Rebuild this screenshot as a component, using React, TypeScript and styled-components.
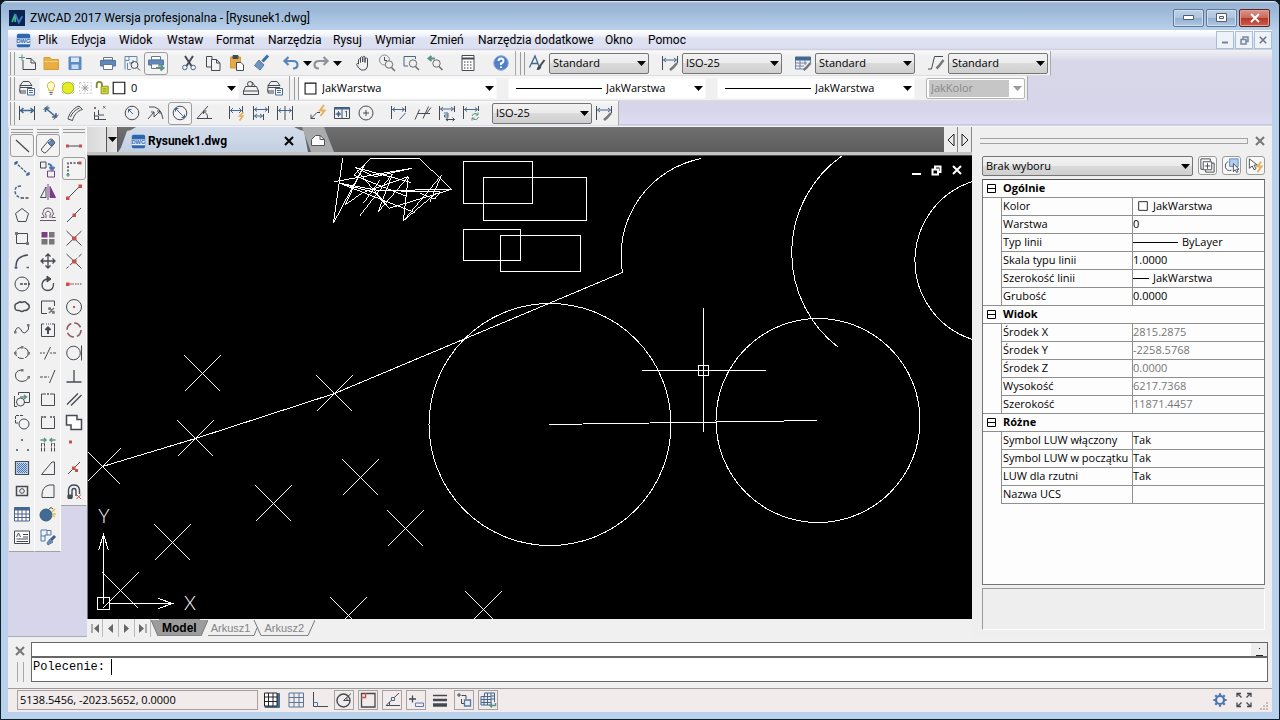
import React from 'react';
import styled, { createGlobalStyle, css } from 'styled-components';

const UI = '"Open Sans", "Noto Sans", sans-serif';
const CAPTION = 'Roboto, "Open Sans", sans-serif';
const INK = '#454a52';
const BLUE = '#44678f';
const RED = '#c8504c';
const GREEN = '#5c9480';
const PURPLE = '#7a3e84';

const Global = createGlobalStyle`
  * { box-sizing: border-box; }
  body { margin: 0; background: #0c1a22; font: 11px/16px ${UI}; color: #000; }
  button, select, input { font: inherit; color: inherit; margin: 0; padding: 0; border: 0; background: none; }
  svg { display: block; }
`;

/* ---------- icons ---------- */

const ICONS: Record<string, React.ReactNode> = {
  newFile: <><path d="M5 6V15.500H17.500V9L13 4.500H8M13 4.500V9H17.500" /><path d="M1 3.500H7M4 .5V6.500" stroke={GREEN} /></>,
  open: <><path d="M2 3.500H8L10 5.500H16.500V15.500H2Z" fill="#e8ae45" stroke="#d79a30" /><path d="M2 7.500H16.500" stroke="#f6cf83" /></>,
  save: <><path d="M3 3H15V15.500H3Z" fill="#5b8bc0" stroke="#5b8bc0" /><path d="M5 3.500H13V8H5Z" fill="#d9e6f4" stroke="none" /><path d="M5.500 10.500H12.500V15H5.500Z" fill="#c9daee" stroke="none" /></>,
  print: <><path d="M4.500 3.500H13.500V6H4.500Z" fill="#fff" stroke="#66788f" /><path d="M1.500 6.500H16.500V12H1.500Z" fill="#6088bb" stroke="#5277a5" /><path d="M4.500 10.500H13.500V15.500H4.500Z" fill="#fff" stroke="#66788f" /></>,
  preview: <><path d="M2 15.500V2.500H14V8M2 6.500H6V2.500M6 9H10V6M4.500 9V15.500H8" stroke="#6387b0" /><circle cx="11.500" cy="11" r="3.500" /><path d="M14 13.500L17 16.500" /></>,
  publish: <><path d="M4.500 2.500H13.500V6H4.500Z" fill="#fff" stroke="#66788f" /><path d="M1.500 6H16.500V11H1.500Z" fill="#6088bb" stroke="#5277a5" /><path d="M4.500 10H12V14.500H4.500Z" fill="#fff" stroke="#66788f" /><path d="M9 14H16M13.500 11.500L16.500 14L13.500 16.500" stroke={GREEN} strokeWidth="2" /></>,
  cut: <><path d="M5 2L11.500 12M13 2L6.500 12" strokeWidth="2" /><circle cx="4.800" cy="13.500" r="2.300" stroke={BLUE} /><circle cx="13.200" cy="13.500" r="2.300" stroke={BLUE} /></>,
  copyClip: <><path d="M2.500 2.500H8V13H2.500Z" /><path d="M7.500 5.500H12.500L16 9V16.500H7.500Z" fill="#f4f4f4" /><path d="M12.500 5.500V9H16" /></>,
  paste: <><path d="M2.500 3H12.500V14H2.500Z" fill="#e3a94a" stroke="#d79a30" /><path d="M5 1.500H10V4.500H5Z" fill={INK} /><path d="M8.500 8.500H13L15.500 11V16.500H8.500Z" fill="#fff" /></>,
  brush: <><path d="M16 1.500L10.500 7.500" stroke="#3d6ea8" strokeWidth="3" /><path d="M7 6L12 11L8 16L2.500 11.500Z" fill="#7093bd" stroke="#57799f" /></>,
  undo: <path d="M6.500 3L2.500 7L6.500 11M3 7H11C17 7 17 14.500 11 14.500" stroke="#5585bd" strokeWidth="2.200" />,
  redo: <path d="M11.500 3L15.500 7L11.500 11M15 7H7C1 7 1 14.500 7 14.500" stroke="#8d9299" strokeWidth="2.200" />,
  hand: <path d="M4.500 10V5.500Q5.500 4 6.500 5.500V8.500V3.500Q7.500 2 8.700 3.500V8V3Q9.700 1.500 11 3V8.500V4.500Q12.200 3.200 13.500 4.500V12Q13 16 10 16H7.500Q5 15.500 2.500 10.500Q3 8.500 4.500 10" />,
  zoomReal: <><circle cx="6.500" cy="6" r="5" stroke="#8a8f96" /><path d="M6.500 3V6.500H9" /><circle cx="11" cy="10.500" r="3.700" fill="#f0f0f0" stroke="#6b6b6b" /><path d="M13.500 13.500L17 17" strokeWidth="1.500" stroke="#6b6b6b" /></>,
  zoomWin: <><path d="M13.500 5V2.500H2V12H6" stroke={BLUE} /><circle cx="11" cy="9.500" r="3.700" stroke="#6b6b6b" /><path d="M13.500 12.500L17 16" strokeWidth="1.500" stroke="#6b6b6b" /></>,
  zoomPrev: <><path d="M9 4.500H3M5.500 2L2.500 4.500L5.500 7" stroke={GREEN} strokeWidth="2" /><circle cx="10.500" cy="9.500" r="3.700" stroke="#6b6b6b" /><path d="M13 12.500L16.500 16" strokeWidth="1.500" stroke="#6b6b6b" /></>,
  calc: <><path d="M3 1.500H15V16.500H3Z" fill="#fff" /><path d="M3 4.500H15" strokeWidth="2" /><path d="M5 8H14M5 11H14M5 14H14" strokeDasharray="1.500 1.500" strokeWidth="1.500" stroke="#777" /></>,
  help: <><circle cx="9" cy="9" r="7.200" fill="#5080c8" stroke="#7aa0d8" /><path d="M6.500 7Q6.500 4.500 9 4.500T11.500 7Q11.500 8.500 9 9.500V11M9 12.500V14" stroke="#fff" strokeWidth="2" /></>,
  textStyle: <><path d="M1.500 13.500L7 2L11.500 13.500M3.500 9.500H10" stroke={BLUE} strokeWidth="1.300" /><path d="M16.500 6L12 12" strokeWidth="2" /><path d="M12.500 11.500Q10 12 9 15.500Q12.500 16 13 12.500" fill={INK} /></>,
  dimStyle: <><path d="M1.500 2V16M16.500 2V9" /><path d="M2.500 6H15.500M5 4L2.500 6L5 8M13 4L15.500 6L13 8" stroke={BLUE} /><path d="M16 9L12 13.500L9 16" strokeWidth="2.500" stroke="#777" /></>,
  tableStyle: <><path d="M1.500 3H16.500V6H1.500Z" fill={BLUE} stroke={BLUE} /><path d="M1.500 6V15H9M1.500 9H13M1.500 12H10M6 6V15M11 6V11M16.500 6V9" stroke="#6c87ab" /><path d="M16.500 9L12 14L9.500 16" strokeWidth="2.500" stroke="#777" /></>,
  leaderStyle: <><path d="M16 2.500H7.500L4.500 15H1" /><path d="M16.500 6L12 12L9.500 14.500" strokeWidth="2.500" stroke="#777" /></>,
  layers: <><path d="M5 2.500H11L14 6.500H2ZM2 6.500V8.500H14M2 8.500L1.500 12H8M2 12V14H8" /><path d="M9.500 9.500H16.500V16H9.500Z" fill="#fff" stroke={BLUE} /><path d="M11 11.500H15M11 13.500H15" stroke={BLUE} /></>,
  layerPrev: <><path d="M3.500 7.500H14.500L16.500 12H1.500ZM1.500 12V15.500H16.500V12" /><circle cx="8" cy="5" r="2.500" fill="#f0f0f0" /><path d="M10 3L13 7" /></>,
  bulb: <><path d="M9 2A4.500 4.500 0 0 0 6.500 10V12H11.500V10A4.500 4.500 0 0 0 9 2Z" fill="#fffbc4" stroke="#c9ad3a" /><path d="M7 14H11M7.500 16H10.500" /></>,
  sun: <><path d="M2 5L5 2M13 2L16 5M2 13L5 16M13 16L16 13" stroke="#b5b545" /><circle cx="9" cy="9" r="6.500" stroke="#9ab02a" fill="#e6ec22" /></>,
  freeze: <><path d="M3 3H16V15H3Z" stroke="#bbb" strokeDasharray="2 2" /><path d="M9 5V13M5 9H13M6 6L12 12M12 6L6 12" stroke="#999" /></>,
  lock: <><path d="M3 9V5Q3 2 6 2T9 5V9" stroke="#7e8b25" strokeWidth="2" /><path d="M8 7H16V15.500H8Z" fill="#d8dd35" stroke="#7e8b25" /><path d="M10 10H14M10 12.500H14" stroke="#7e8b25" /></>,
  swatch: <path d="M2.500 2.500H15.500V15.500H2.500Z" stroke="#111" strokeWidth="1.300" fill="#fff" />,
  dimLinear: <><path d="M1.500 2V16M16.500 2V16" /><path d="M2.500 6.500H15.500M5.500 4L2.500 6.500L5.500 9M12.500 4L15.500 6.500L12.500 9" stroke={BLUE} strokeWidth="1.500" /></>,
  dimAligned: <><path d="M1.500 6L6 1.500M11.500 15.500L16.500 11" /><path d="M3.500 4L14 13M3.500 8V4H7.500M14 9V13H10" stroke={BLUE} strokeWidth="1.600" /></>,
  dimArc: <path d="M2 15C3 10 7 4 13 2L16.500 5.500C11 7 8 11 6.500 16.500ZM4.500 13C6 9 9 6 13.500 4" />,
  dimOrdinate: <><path d="M4.500 8V15.500H16M4.500 12H8.500V15.500M8.500 6V11H14" /><path d="M4 3L6 5M6 3L4 5M13 2L15.500 4.500M15.500 2L13 4.500" stroke="#8a6a70" /></>,
  dimRadius: <><circle cx="9" cy="9" r="6.800" /><path d="M5.500 5.500L10 10M5.500 8.500V5.500H8.500" stroke={BLUE} /></>,
  dimJogged: <><path d="M2 3Q14 1 16 15" /><path d="M1 15L7 8V13L13 7M4 8H7M10 7H13V10" /></>,
  dimDiameter: <><circle cx="9" cy="9" r="6.800" /><path d="M4.500 4.500L13.500 13.500M4.500 7.500V4.500H7.500M13.500 10.500V13.500H10.500" stroke={BLUE} /></>,
  dimAngular: <path d="M13 2L2 14.500H17M8 7.500Q13 9 12.500 14M8.500 10V7H11.500" />,
  quickDim: <><path d="M1.500 2V15M14.500 2V10" /><path d="M2.500 6.500H13.500M5 4L2.500 6.500L5 9M11 4L13.500 6.500L11 9" stroke={BLUE} /><path d="M15.500 8L11.500 12H15L11.500 16.500" stroke="#e0ae55" strokeWidth="1.500" /></>,
  dimBase: <><path d="M1.500 2V16M16.500 2V9M11.500 10V16" /><path d="M2.500 5.500H15.500M5 3.500L2.500 5.500L5 7.500M13 3.500L15.500 5.500L13 7.500M2.500 12H10.500M5 10L2.500 12L5 14M8 10L10.500 12L8 14" stroke={BLUE} /></>,
  dimCont: <><path d="M1.500 2V16M9 2V16M16.500 2V16" /><path d="M2.500 6.500H15.500M5 4.500L2.500 6.500L5 8.500M13 4.500L15.500 6.500L13 8.500" stroke={BLUE} /></>,
  quickLeader: <><path d="M2 14.500L8 8.500H11M2 10.500V14.500H6" /><path d="M15 1L11 6.500H15.500L11.500 12" stroke="#e2b25c" strokeWidth="2" /></>,
  tolerance: <><path d="M1.500 3.500H16.500V14.500H1.500ZM9 3.500V14.500" /><path d="M1.500 4.500H16.500" stroke={BLUE} strokeWidth="2" /><path d="M5.500 7V13M2.500 10H8M12 8L13.500 7V13" stroke={BLUE} /><circle cx="5.500" cy="10" r="1.500" stroke={BLUE} /></>,
  centerMark: <><circle cx="9" cy="9" r="7" /><path d="M6 9H12M9 6V12" /></>,
  dimEdit: <><path d="M1.500 2V15M15.500 2V8" /><path d="M2.500 5.500H14.500M5 3.500L2.500 5.500L5 7.500M12 3.500L14.500 5.500L12 7.500M15.500 9L9.500 15.500" stroke={BLUE} /></>,
  dimOblique: <path d="M1 15.500L5.500 5.500M9 14.500L14.500 2.500M4 9.500H16M12.500 9.500L17 3.500" />,
  dimTextEdit: <><path d="M1.500 2V16M16.500 2V8" /><path d="M2.500 5H15.500M5 3L2.500 5L5 7M13 3L15.500 5L13 7M6 9H10V13H6.500V11H10" stroke={BLUE} /><path d="M8 15.500H16.500M10 13.500L8 15.500L10 17M14.500 13.500L16.500 15.500L14.500 17" /></>,
  dimUpdate: <><path d="M1.500 2V15M16.500 2V7" /><path d="M2.500 5.500H15.500M5 3.500L2.500 5.500L5 7.500M13 3.500L15.500 5.500L13 7.500" stroke={BLUE} /><path d="M10 12Q11 9 14 9.500L16 11M16 8.500V11H13.500M16.500 13Q15 16.500 12 15.500L10 14M10 16.500V14H12.500" stroke={GREEN} /></>,
  line: <path d="M3 3L16 15" strokeWidth="1.300" />,
  xline: <path d="M2 2L16 15M2 5V2H5M16 12V15H13" stroke={BLUE} strokeDasharray="3 1" strokeWidth="1.300" />,
  pline: <><path d="M8 3Q2 3 2 8T8 15" strokeDasharray="3 1.500" stroke={BLUE} strokeWidth="1.500" /><path d="M8 15H16" strokeDasharray="3 1.500" strokeWidth="1.500" /></>,
  polygon: <path d="M9 2.500L15.500 7.500L13 15.500H5L2.500 7.500Z" />,
  rect: <><path d="M3.500 4.500H14.500V14.500H3.500Z" /><path d="M2 3H5V6H2ZM13 13H16V16H13Z" fill="#777" stroke="none" /></>,
  arc: <><path d="M3 14Q3 4 15 3" strokeWidth="1.400" /><path d="M1.500 15.500H4.500M3 14V17M13.500 15.500H16" stroke={BLUE} strokeWidth="1.500" /></>,
  circle: <><circle cx="9" cy="9" r="7" /><path d="M7 9H17" strokeDasharray="3 1" strokeWidth="1.400" /></>,
  cloud: <path d="M5 5Q6 3 9 4.500Q12 2.500 14 5.500Q17 7 16 10Q14 13 11 12.500Q9 14.500 6.500 12.500Q2 13 2 9.500Q1 6 5 5Z" strokeWidth="1.500" />,
  spline: <><path d="M2 11Q4 4 7.500 8Q11 16 15.500 8V4" /><path d="M1 10H3.500V12.500H1ZM14 3H16.500V5.500H14Z" fill="#777" stroke="none" /></>,
  ellipse: <><ellipse cx="9" cy="9" rx="6.500" ry="5.500" strokeDasharray="6 1.500" /><path d="M1 8H3.500V10.500H1ZM8 2H10.500V4.500H8ZM14.500 8H17V10.500H14.500Z" fill="#777" stroke="none" /></>,
  ellArc: <><path d="M8 3Q2 4 2.500 9T9 14.500Q13 14.500 15.500 11" /><path d="M8 2H10.500V4.500H8ZM14.500 9H17V11.500H14.500Z" fill="#777" stroke="none" /></>,
  insert: <><path d="M5.500 5V2.500H16.500V12.500H11M1.500 6V16.500H4" /><circle cx="7.500" cy="12" r="4" /><path d="M7 7H13M11 5L13.500 7L11 9" stroke={GREEN} strokeWidth="1.500" /></>,
  block: <><path d="M2.500 10V2.500H11M2.500 10H5" strokeDasharray="3 1" /><circle cx="11" cy="11" r="5" fill="#f4f4f4" /></>,
  point: <path d="M8 3H10V5H8ZM3 13H5V15H3ZM14 13H16V15H14Z" fill="#6b7482" stroke="none" />,
  hatch: <><path d="M2.500 2.500H15.500V15.500H2.500Z" fill="#c4d4ee" strokeWidth="1.200" /><path d="M4 4.500H14M4 6.500H14M4 8.500H14M4 10.500H14M4 12.500H14" stroke="#4672ad" strokeDasharray="1 1" /><path d="M5 5.500H14M5 7.500H14M5 9.500H14M5 11.500H14M5 13.500H14" stroke="#4672ad" strokeDasharray="1 1" /></>,
  region: <><path d="M3.500 4.500H14.500V13.500H3.500Z" strokeWidth="1.500" /><circle cx="9" cy="9" r="2.300" /></>,
  table: <><path d="M1.500 2.500H16.500V16H1.500Z" fill="#fff" stroke={BLUE} /><path d="M1.500 4H16.500" stroke={BLUE} strokeWidth="3" /><path d="M1.500 9H16.500M1.500 12.500H16.500M5 5V16M9 5V16M13 5V16" stroke="#4c5f95" /></>,
  mtext: <><path d="M1.500 3H16.500V15.500H1.500Z" fill="#fff" /><path d="M3.500 9L5.500 5L7.500 9M10 6.500H15M10 9H15M3.500 11H15M3.500 13.500H15" /></>,
  erase: <><path d="M2.500 12L10.500 2.500Q12 1.500 13.500 2.500L15.500 5Q16 6 15 7L7 15.500Q5.500 16.500 4 15L2.500 13.500Z" /><path d="M9 6L13 3L15 5.500L12 9Z" fill="#6684bd" stroke={BLUE} /></>,
  copy: <><path d="M1.500 2H7V8H1.500Z" /><path d="M8.500 11H15.500V17H8.500Z" stroke={PURPLE} /><path d="M9 4Q13 4 13 9M10.500 7L13 10L15.500 7" stroke="#4c78ad" strokeWidth="2" /></>,
  mirror: <><path d="M7 4V14.500H1.500Z" /><path d="M9 1V17" stroke={PURPLE} /><path d="M11 3.500V14.500H16.500Z" fill={PURPLE} stroke={PURPLE} /></>,
  offset: <path d="M1 14.500H17M2 11.500H5V10Q2 8 4.500 5.500Q4.500 2 9 2T13.500 5.500Q16 8 13 10V11.500H16.500M7 12V9Q5 7 7.500 6Q9 4 10.500 6Q13 7 11 9V12" stroke="#6c4f72" />,
  array: <><path d="M2.500 3H8.500V8.500H2.500Z" fill={PURPLE} stroke="none" /><path d="M10 3H15.500V8.500H10ZM2.500 10H8.500V15.500H2.500ZM10 10H15.500V15.500H10Z" fill="#777" stroke="none" /></>,
  move: <path d="M9 2V16M2 9H16M6.500 4.500L9 2L11.500 4.500M6.500 13.500L9 16L11.500 13.500M4.500 6.500L2 9L4.500 11.500M13.500 6.500L16 9L13.500 11.500" strokeWidth="1.300" />,
  rotate: <><path d="M14.500 8Q15 15 9 15.500Q3 15.500 3 9.500Q3.500 4.500 9 4" strokeWidth="1.300" /><path d="M8 1L12 4L8 7Z" fill={INK} /></>,
  scale: <><path d="M8 15.500H2.500V3H15.500V8" /><path d="M10 10L15 15M15 10L10 15M10 12V10H12M13 15H15V13" stroke="#777" strokeWidth="1.500" /></>,
  stretch: <><path d="M2.500 3V15.500H15.500V3M2.500 3H5M13 3H15.500" /><path d="M7 3H12" strokeDasharray="1 1" /><path d="M9 13V7M6.500 9L9 6.500L11.500 9" strokeWidth="2" /></>,
  trim: <path d="M1 9H3M4 9H6M5.500 15.500L11.500 3M11 9H13M14 9H17" />,
  extend: <><path d="M1 10H10" strokeDasharray="3 1" /><path d="M10.500 16L16 3" /></>,
  breakOne: <><path d="M2.500 4H7M11 4H15.500V15.500H2.500V4" /><path d="M8 3H10V5H8Z" fill="#777" stroke="none" /></>,
  breakTwo: <><path d="M2.500 4V15.500H15.500V4" /><path d="M2 3H4.500V5H2ZM5 3H7V5H5ZM11 3H13V5H11ZM14 3H16V5H14Z" fill="#777" stroke="none" /></>,
  join: <><path d="M2.500 15.500V7.500H5.500V15.500M15.500 15.500V7.500H12.500V15.500" strokeDasharray="4 1" /><path d="M1.500 4H7M5 2L7 4L5 6M16.500 4H11M13 2L11 4L13 6" stroke={GREEN} strokeWidth="1.400" /></>,
  chamfer: <path d="M2.500 15.500L13 3H15.500V15.500Z" />,
  fillet: <path d="M3 15.500V13Q3 5 10 3H15V15.500H3" />,
  explode: <><circle cx="7" cy="10" r="6" fill="#426b93" stroke="#385b7e" /><path d="M10 4Q12 1 14 4" /><path d="M13 7L16 4M14 9H17M13 10L16 12" stroke="#e0c242" strokeWidth="1.500" /></>,
  matchProp: <><path d="M2 2H8V7H12V2.500H8M2 2V8H6V13H2V8M8 7H6V8" stroke="#4c78ad" /><path d="M16 8L11 13" stroke="#3d5e88" strokeWidth="3" /><path d="M11 11L14 14L9 17L8 15Z" fill="#6a8fba" stroke="#57799f" /></>,
  snapTrack: <><path d="M3 9H15" /><path d="M1 7.500H4V10.500H1ZM14 7.500H17V10.500H14Z" fill={RED} stroke="none" /></>,
  snapFrom: <><path d="M3 15V3H15" strokeDasharray="2 1.500" strokeWidth="1.500" /><path d="M13.500 1.500H16.500V4.500H13.500Z" fill={RED} stroke="none" /><path d="M2 14H4V16H2Z" stroke={GREEN} /></>,
  snapEnd: <><path d="M3 15L15 3" /><path d="M1 13.500H4.500V17H1ZM13.500 1.500H17V5H13.500Z" fill={RED} stroke="none" /></>,
  snapMid: <><path d="M2 16L16 2" /><path d="M7.500 7.500H11V11H7.500Z" fill={RED} stroke="none" /></>,
  snapInt: <><path d="M1.500 2L16.500 16.500M16.500 2L1.500 16.500" /><path d="M7.500 8H11V11H7.500Z" fill={RED} stroke={RED} /></>,
  snapApp: <><path d="M1.500 2L16.500 16.500" /><path d="M16.500 2L1.500 16.500" strokeDasharray="4 2" /><path d="M7.500 8H11V11H7.500Z" fill={RED} stroke={RED} /></>,
  snapExt: <><path d="M1 7.500H4.500V11H1Z" fill={RED} stroke="none" /><path d="M4 9H9" stroke={RED} /><path d="M10 9H17" strokeDasharray="1.500 1" /></>,
  snapCen: <><circle cx="9" cy="9" r="7.500" /><path d="M8 8H10V10H8Z" fill={RED} stroke="none" /></>,
  snapQuad: <circle cx="9" cy="9" r="7" strokeDasharray="8 3" stroke="#8e5a63" strokeWidth="1.600" />,
  snapTan: <><circle cx="8.500" cy="9" r="6.800" /><path d="M16.500 1.500V16.500" /></>,
  snapPerp: <path d="M9 3V15M1.500 15H16.500" strokeWidth="1.300" />,
  snapPar: <path d="M2 14.500L13 3.500M6 15.500L16.500 5" strokeWidth="1.300" />,
  snapIns: <path d="M1.500 2.500H12V6.500H16.500V16.500H6V12H1.500Z" fill="#fff" strokeWidth="1.500" />,
  snapNode: <path d="M4 4.500H7V7.500H4Z" fill={RED} stroke="none" />,
  snapNear: <><path d="M3 15L15 3" /><path d="M7 7.500H10.500V11H7Z M10 10H13V13H10Z" fill={RED} stroke="none" /></>,
  magnet: <><path d="M3.500 15.500V8Q4 3 9 3T14.500 8V12M7 15.500V9Q7 6.500 9 6.500T11 9V14" strokeWidth="1.400" /><path d="M3 13H7V16.500H3Z" fill={INK} /><path d="M11.500 12.500L16 17M16 12.500L11.500 17" stroke={RED} /></>,
  snapGrid: <><path d="M2 2.500H16.500V16.500H2Z" fill="#47708f" stroke="#47708f" /><path d="M1.500 2H14V15H1.500Z" fill="#fff" stroke="#222" /><path d="M1.500 6H14M1.500 10.500H14M5.500 2V15M10 2V15" stroke="#222" /></>,
  gridMode: <path d="M2 2H16.500V16H2ZM2 6.500H16.500M2 11.500H16.500M7 2V16M12 2V16" stroke="#5a7796" />,
  ortho: <><path d="M2.500 1V15.500H17" /><path d="M2.500 11.500H6.500V15.500" stroke="#5b76b8" /></>,
  polar: <><circle cx="8.500" cy="9.500" r="6.500" strokeWidth="1.400" /><path d="M8.500 9.500L16 2.500M8.500 9.500H15M12 6.500V9" /></>,
  osnap: <><path d="M2.500 2.500H16V16H2.500Z" strokeWidth="1.300" /><path d="M2 6.500H6.500V2" stroke={RED} strokeWidth="1.400" /></>,
  otrack: <><path d="M16 2L3 14.500H17M6.500 11V14.500" /><path d="M8.500 6.500H11.500V9.500H8.500Z" fill="#f1ecec" stroke={BLUE} /></>,
  dynInput: <><path d="M2 8H9M5.500 4.500V11.500" strokeWidth="1.300" /><path d="M8.500 12H16.500V15.500H8.500Z" stroke="#5b76b8" /></>,
  lineWeight: <><path d="M2 4.500H16" strokeWidth="1.500" /><path d="M2 9H16" strokeWidth="2.500" /><path d="M2 14H16" strokeWidth="3.500" /></>,
  cycle: <><path d="M2 4H6M4 2V6M6.500 4.500H11V8M6.500 8V12.500H9" /><path d="M9.500 9H15.500V15H9.500Z" stroke="#4c78ad" strokeWidth="1.300" /></>,
  annoScale: <><path d="M5.500 2H15.500V11M5.500 2V5M2 5.500H12V14H2ZM8.500 2V5M12 2V5M12 5H15.500M12 8H15.500M5 5.500V14M8.500 5.500V14M2 8.500H12M2 11.500H12" stroke={BLUE} /><path d="M16.500 12V14.500H11M13 12.500L11 14.500L13 16.500" stroke={GREEN} strokeWidth="1.500" /></>,
  gear: <><circle cx="9" cy="9" r="4.500" stroke="#4c77ad" strokeWidth="2.500" /><path d="M9 1.500V4M9 14V16.500M1.500 9H4M14 9H16.500M3.700 3.700L5.300 5.300M12.700 12.700L14.300 14.300M14.300 3.700L12.700 5.300M3.700 14.300L5.300 12.700" stroke="#4c77ad" strokeWidth="2.500" /></>,
  expand: <path d="M2 6V2.500H6M2.500 2.500L6.500 6.500M12 2.500H16V6M15.500 2.500L11.500 6.500M2 11.500V15.500H6M2.500 15.500L6.500 11.500M12 15.500H16V11.500M15.500 15.500L11.500 11.500" strokeWidth="1.300" />,
  pickAdd: <><path d="M4.500 13H2V2H12V4.500" /><path d="M4.500 5H13.500V13.500H4.500Z" fill="#fff" /><path d="M6 9.500H12M9 6.500V12.500M13.500 6.500H16V16H7V14" /></>,
  selectObj: <><path d="M7 2H16V10H7Z" fill="#b4cfee" stroke="#5b8bc0" /><path d="M5.500 4.500Q1.500 7 2.500 11Q4.500 15.500 9 14" /><path d="M11 7V15.500L13 13.500L14.500 16.500L16 15.500L14.500 13H17Z" fill="#fff" /></>,
  quickSel: <><path d="M2.500 2V12L5.500 9.500L7.500 13.500L9.500 12.500L7.500 8.500H11Z" fill="#fff" /><path d="M15 5L11 10H15.500L11 16" stroke="#e2b25c" strokeWidth="2" /></>,
  dwg: <><rect x="1" y="1" width="16" height="16" rx="2" fill="#2f66b0" stroke="none" /><rect x="1" y="6.500" width="16" height="7" fill="#e8f0fa" stroke="none" /><text x="9" y="12.500" textAnchor="middle" fontSize="7" fontWeight="700" fontFamily="Liberation Sans, sans-serif" fill="#2f66b0" stroke="none">DWG</text></>,
  app: <><rect x="0" y="0" width="18" height="18" fill="#0c2350" stroke="none" /><path d="M3.500 13.500L7 4.500V13.500" stroke="#3fb58e" strokeWidth="2" /><path d="M7 4.500L11 14L15 7" stroke="#3f7dc5" strokeWidth="2" /></>,
  page: <><path d="M2.500 14.500V8.500L6.500 4.500H11L15.500 8.500V14.500Z" fill="#fff" stroke="#555" /><path d="M11 4.500V8.500H15.500" stroke="#555" /></>,
};

const Icon = ({ name, size = 18 }: { name: string; size?: number }) => (
  <svg width={size} height={size} viewBox="0 0 18 18" fill="none" stroke={INK} aria-hidden="true">
    {ICONS[name]}
  </svg>
);

const Caret = ({ color = '#000' }: { color?: string }) => (
  <svg width="9" height="5" viewBox="0 0 9 5" aria-hidden="true"><path d="M0 0H9L4.500 5Z" fill={color} /></svg>
);

const CrossMark = ({ size = 10, color = '#777' }: { size?: number; color?: string }) => (
  <svg width={size} height={size} viewBox="0 0 10 10" aria-hidden="true">
    <path d="M1 1L9 9M9 1L1 9" stroke={color} strokeWidth="2" />
  </svg>
);

/* ---------- window frame ---------- */

const Frame = styled.div`
  min-height: 100vh;
  display: flex;
  flex-direction: column;
  padding: 0 7px 7px;
  border: 1px solid #10202c;
  border-radius: 7px 7px 0 0;
  background: #b9d1ea;
`;

const TitleBar = styled.header`
  display: flex;
  align-items: center;
  height: 29px;
  flex: none;
  margin: 0 -7px;
  padding: 4px 9px 0 8px;
  gap: 5px;
  border-radius: 6px 6px 0 0;
  background: linear-gradient(#e9f1fa 0, #9ab3d3 2px, #9db9d9 10px, #a5c1dd 16px, #b9d0ec);
`;

const Title = styled.span`
  flex: 1;
  font: 12px/16px ${CAPTION};
  white-space: nowrap;
`;

const FrameButtons = styled.div`
  display: flex;
  gap: 2px;
`;

const FrameButton = styled.button<{ $danger?: boolean }>`
  display: grid;
  place-items: center;
  width: 31px;
  height: 18px;
  border: 1px solid ${(p) => (p.$danger ? '#5e2424' : '#5f7896')};
  border-radius: 2px;
  box-shadow: inset 0 0 0 1px ${(p) => (p.$danger ? '#dfa096' : '#d0dff0')};
  background: ${(p) =>
    p.$danger
      ? 'linear-gradient(#d9958a 0, #cb6a5c 48%, #b53528 50%, #cd5f4b)'
      : 'linear-gradient(#bdd0e6 0, #afc5de 48%, #93afcd 50%, #aec8e4)'};
`;

const MenuBar = styled.nav`
  display: flex;
  align-items: center;
  height: 20px;
  flex: none;
  padding-left: 8px;
  background: linear-gradient(#fff 0, #f3f5fb 5px, #dfe2f1 8px, #dcdff0 18px, #c9cbd8);
`;

const MenuItem = styled.button<{ $w: number }>`
  flex: 0 0 ${(p) => p.$w}px;
  text-align: left;
  font: 12px/16px ${CAPTION};
  white-space: nowrap;
`;

const MenuIcon = styled.span`
  width: 22px;
`;

const ChildButtons = styled.div`
  display: flex;
  gap: 1px;
  margin-left: auto;
`;

const ChildButton = styled.button`
  display: grid;
  place-items: center;
  width: 18px;
  height: 18px;
  border: 1px solid #a9bdd3;
  background: #eef3fa;
`;

/* ---------- toolbars ---------- */

const Dock = styled.div`
  flex: none;
  padding: 1px 0;
  background: linear-gradient(#f0f0f4 0, #d8d6e9 12px, #d7d5e9 60px, #dddcf3 74px, #aeb4c2 75px, #f4f6fb 76px);
`;

const DockRow = styled.div`
  display: flex;
  height: 25px;
`;

const Toolbar = styled.div<{ $first?: boolean }>`
  display: flex;
  align-items: center;
  height: 25px;
  padding: 0 2px 0 ${(p) => (p.$first ? 2 : 4)}px;
  border-right: 1px solid #a8a8ae;
  border-bottom: 1px solid #dcdce0;
  background: linear-gradient(#fafafa, #f0f0f0 4px);
`;

const Grip = styled.i`
  width: 5px;
  height: 23px;
  border: solid #9c9c9c;
  border-width: 0 1px;
`;

const Gap = styled.i<{ $w?: number }>`
  width: ${(p) => p.$w ?? 9}px;
`;

const ToolButton = styled.button<{ $on?: boolean }>`
  display: grid;
  place-items: center;
  flex: none;
  width: 24px;
  height: 23px;
  border: 1px solid ${(p) => (p.$on ? '#9d9d9d' : 'transparent')};
  border-radius: 3px;
  background: ${(p) => (p.$on ? '#f3f3f3' : 'none')};
`;

const DropButton = styled.button`
  display: grid;
  place-items: center;
  width: 6px;
  height: 23px;
`;

const Box = styled.span<{ $w?: number; $flat?: boolean; $off?: boolean }>`
  display: flex;
  align-items: center;
  gap: 4px;
  flex: ${(p) => (p.$w ? `0 0 ${p.$w}px` : '1 1 0')};
  min-width: 0;
  height: 21px;
  padding: 0 2px 0 3px;
  border: 1px solid #757575;
  border-radius: 2px;
  background: linear-gradient(#f2f2f2, #ebebeb 48%, #dadada 50%, #cfcfcf);
  ${(p) => p.$flat && css`
    border-color: #f8f8f8;
    background: #fff;
  `}
  ${(p) => p.$off && css`
    border-color: #b5b5b5;
    color: #8a8a8a;
    padding-left: 2px;
  `}
`;

const Native = styled.select`
  flex: 1;
  min-width: 0;
  height: 17px;
  appearance: none;
  outline: 0;
  opacity: 1;
  &:disabled { background: #c6c6c6; color: #888; padding-left: 2px; }
`;

const Stroke = styled.i<{ $w: number }>`
  flex: 0 0 ${(p) => p.$w}px;
  height: 1px;
  background: #000;
`;

const LayerFlags = styled.span`
  display: flex;
  gap: 1px;
`;

type ComboProps = { label: string; value: string; w?: number; flat?: boolean; off?: boolean; children?: React.ReactNode };
const Combo = ({ label, value, w, flat, off, children }: ComboProps) => (
  <Box $w={w} $flat={flat} $off={off}>
    {children}
    <Native aria-label={label} disabled={off}><option>{value}</option></Native>
    <Caret color={off ? '#9a9a9a' : '#000'} />
  </Box>
);

const Tools = ({ names, on }: { names: string[]; on?: string }) => (
  <>
    {names.map((n) => (
      <ToolButton key={n} $on={n === on} aria-label={n}><Icon name={n} /></ToolButton>
    ))}
  </>
);

/* ---------- main area ---------- */

const Main = styled.main`
  flex: 1;
  display: flex;
  min-height: 510px;
  background: #f0f0f0;
`;

const SideDock = styled.aside`
  flex: 0 0 79px;
  display: flex;
  align-items: flex-start;
  padding-left: 1px;
  border-bottom: 1px solid #a8adb8;
  background: #d7d5e9;
`;

const ToolColumn = styled.div`
  display: flex;
  flex-direction: column;
  align-items: center;
  width: 26px;
  padding-bottom: 3px;
  border-right: 1px solid #fff;
  border-bottom: 1px solid #a0a0a8;
  background: #f1f1f1;
`;

const ColumnGrip = styled.i`
  width: 22px;
  height: 4px;
  margin: 2px 0 1px;
  border: solid #9c9c9c;
  border-width: 1px 0;
`;

const Center = styled.section`
  flex: 1;
  min-width: 0;
  display: flex;
  flex-direction: column;
`;

const TabStrip = styled.div`
  display: flex;
  height: 29px;
  flex: none;
  border-bottom: 1px solid #4d4d4d;
  box-shadow: inset 0 -3px #c3c3c3;
  padding-bottom: 3px;
  background: linear-gradient(#707070, #5a5a5a);
`;

const StripCap = styled.button<{ $w: number }>`
  display: grid;
  place-items: center;
  width: ${(p) => p.$w}px;
  border-right: 1px solid #555;
  background: linear-gradient(90deg, #d8d8d8, #e6e6e6);
`;

const DocTab = styled.div`
  display: flex;
  align-items: center;
  gap: 2px;
  width: 190px;
  padding: 3px 12px 0 13px;
  font: bold 12px/16px ${CAPTION};
  clip-path: polygon(0 100%, 3px 82%, 9px 16%, 13px 3px, 18px 0, 176px 0, 182px 3px, 186px 16%, 190px 100%);
  background: linear-gradient(#d3dcea, #c3d0e2);
`;

const DocName = styled.span`
  flex: 1;
`;

const TabClose = styled.button`
  display: grid;
  place-items: center;
  width: 14px;
  height: 14px;
`;

const NewTab = styled.button`
  display: grid;
  place-items: center;
  width: 32px;
  padding-top: 1px;
  margin-left: -6px;
  margin-right: auto;
  clip-path: polygon(0 0, 22px 0, 32px 100%, 9px 100%);
  background: #a9abad;
`;

const Arrow = styled.button`
  display: grid;
  place-items: center;
  width: 14px;
  border-right: 1px solid #888;
  background: #ececec;
`;

const Canvas = styled.div`
  position: relative;
  flex: 1;
  overflow: hidden;
  border-left: 1px solid #777;
  background: #000;
`;

const Sketch = styled.svg`
  position: absolute;
  width: 100%;
  height: 100%;
`;

const ViewButtons = styled.div`
  position: absolute;
  top: 8px;
  right: 10px;
  display: flex;
  gap: 9px;
`;

const ViewButton = styled.button`
  width: 11px;
  height: 12px;
  display: grid;
  place-items: center;
`;

const SheetBar = styled.div`
  display: flex;
  align-items: stretch;
  height: 18px;
  flex: none;
  font: 12px/18px "Liberation Sans", sans-serif;
`;

const SheetNav = styled.button`
  display: grid;
  place-items: center;
  width: 16px;
  padding-top: 1px;
  border-right: 1px solid #bbb;
`;

const SheetTab = styled.button<{ $active?: boolean }>`
  height: 17px;
  padding: 3px 3px 0;
  line-height: 13px;
  color: ${(p) => (p.$active ? '#000' : '#858585')};
  font-size: ${(p) => (p.$active ? 12 : 11)}px;
  font-weight: ${(p) => (p.$active ? 700 : 400)};
  border-bottom: 1px solid #888;
  background: ${(p) => (p.$active ? '#9c9c9c' : 'none')};
`;

/* ---------- properties ---------- */

const Panel = styled.aside`
  flex: 0 0 300px;
  display: flex;
  flex-direction: column;
  padding: 8px 7px 7px 10px;
  background: #efefef;
`;

const PanelHead = styled.div`
  display: flex;
  align-items: center;
  gap: 6px;
  height: 12px;
  margin: 0 0 9px -2px;
`;

const PanelGrip = styled.i`
  flex: 1;
  height: 6px;
  border: 1px solid #a3a3a3;
  border-left: 0;
`;

const PanelClose = styled.button`
  display: grid;
  place-items: center;
  width: 11px;
  height: 11px;
`;

const PickRow = styled.div`
  display: flex;
  gap: 5px;
  height: 20px;
  margin-bottom: 3px;
  > span { height: 20px; }
`;

const PickButton = styled.button`
  display: grid;
  place-items: center;
  width: 19px;
  height: 19px;
  border: 1px solid #9a9a9a;
  border-radius: 3px;
  background: #f8f8f8;
`;

const Sheet = styled.div`
  flex: 1;
  border: 1px solid #74747c;
  border-top-color: #555;
  background: #fdfdfd;
`;

const Grid = styled.table`
  width: 100%;
  table-layout: fixed;
  border-spacing: 0;
  td, th { height: 18px; padding: 0; line-height: 16px; text-align: left; vertical-align: top; white-space: nowrap; border-bottom: 1px solid #8f8f8f; }
  col.gutter { width: 18px; }
  col.name { width: 131px; }
`;

const Gutter = styled.td<{ $last?: boolean }>`
  && { border-bottom-color: ${(p) => (p.$last ? '#8f8f8f' : 'transparent')}; }
`;

const NameCell = styled.td`
  && { border-left: 1px solid #8f8f8f; padding-left: 1px; overflow: hidden; }
`;

const ValueCell = styled.td<{ $dim?: boolean }>`
  && { border-left: 1px solid #8f8f8f; }
  color: ${(p) => (p.$dim ? '#777' : '#000')};
`;

const ValueLine = styled.span`
  display: flex;
  align-items: center;
  gap: 4px;
`;

const GroupHead = styled.span`
  display: flex;
  align-items: center;
  gap: 7px;
  padding-left: 4px;
`;

const Note = styled.div`
  flex: 0 0 42px;
  margin-top: 3px;
  border: 1px solid #9a9a9a;
  border-right-color: #fff;
  border-bottom-color: #fff;
  background: #eee;
`;

/* ---------- command line and status ---------- */

const Command = styled.section`
  flex: none;
  display: flex;
  height: 51px;
  padding: 5px 4px 6px 7px;
  gap: 6px;
  background: #f0f0f0;
`;

const CommandSide = styled.div`
  display: flex;
  flex-direction: column;
  align-items: center;
  gap: 5px;
  width: 10px;
  padding-top: 4px;
`;

const CommandGrip = styled.i`
  width: 7px;
  height: 21px;
  border: solid #a8a8a8;
  border-width: 0 1px;
`;

const CommandBoxes = styled.div`
  flex: 1;
  border: 1px solid #666;
`;

const History = styled.div`
  display: flex;
  justify-content: flex-end;
  height: 15px;
  border-bottom: 2px solid #666;
  background: #fff;
`;

const Spinner = styled.button`
  display: flex;
  align-items: flex-end;
  justify-content: center;
  width: 16px;
  background: #eee;
`;

const Prompt = styled.label`
  display: flex;
  height: 23px;
  padding: 1px 0 0 1px;
  background: #fff;
  font: 12px/16px "Liberation Mono", monospace;
`;

const PromptInput = styled.input`
  flex: 1;
  height: 16px;
  margin-left: 6px;
  border-left: 1px solid #000;
  outline: 0;
`;

const Status = styled.footer`
  flex: none;
  display: flex;
  align-items: center;
  height: 24px;
  padding: 0 16px 2px 9px;
  border-top: 1px solid #9a9a9a;
  background: #f1ebeb;
`;

const Coords = styled.output`
  width: 241px;
  height: 20px;
  margin-right: 2px;
  padding: 0 2px;
  line-height: 17px;
  border: 1px solid #a9a0a0;
`;

const StatusButton = styled.button<{ $on?: boolean }>`
  display: grid;
  place-items: center;
  width: 20px;
  height: 20px;
  margin: 0 2px;
  border: 1px solid ${(p) => (p.$on ? '#a9a2a2' : 'transparent')};
`;

const StatusEnd = styled.div`
  display: flex;
  margin-left: auto;
`;

const SizeGrip = styled.svg`
  align-self: flex-end;
  margin-right: -14px;
`;

/* ---------- data ---------- */

const MENU: [string, number][] = [
  ['Plik', 33], ['Edycja', 48], ['Widok', 48], ['Wstaw', 49], ['Format', 52], ['Narzędzia', 65], ['Rysuj', 42],
  ['Wymiar', 55], ['Zmień', 48], ['Narzędzia dodatkowe', 127], ['Okno', 43], ['Pomoc', 50],
];

const DRAW = ['line', 'xline', 'pline', 'polygon', 'rect', 'arc', 'circle', 'cloud', 'spline', 'ellipse', 'ellArc', 'insert', 'block', 'point', 'hatch', 'region', 'table', 'mtext'];
const MODIFY = ['erase', 'copy', 'mirror', 'offset', 'array', 'move', 'rotate', 'scale', 'stretch', 'trim', 'extend', 'breakOne', 'breakTwo', 'join', 'chamfer', 'fillet', 'explode', 'matchProp'];
const SNAP = ['snapTrack', 'snapFrom', 'snapEnd', 'snapMid', 'snapInt', 'snapApp', 'snapExt', 'snapCen', 'snapQuad', 'snapTan', 'snapPerp', 'snapPar', 'snapIns', 'snapNode', 'snapNear', 'magnet'];
const MODES = ['snapGrid', 'gridMode', 'ortho', 'polar', 'osnap', 'otrack', 'dynInput', 'lineWeight', 'cycle', 'annoScale'];
const MODES_OFF = ['snapGrid', 'gridMode', 'ortho', 'lineWeight'];

type Prop = { name: string; value: string; swatch?: boolean; line?: number };
const GROUPS: { title: string; dim?: boolean; rows: Prop[] }[] = [
  {
    title: 'Ogólnie',
    rows: [
      { name: 'Kolor', value: 'JakWarstwa', swatch: true },
      { name: 'Warstwa', value: '0' },
      { name: 'Typ linii', value: 'ByLayer', line: 45 },
      { name: 'Skala typu linii', value: '1.0000' },
      { name: 'Szerokość linii', value: 'JakWarstwa', line: 16 },
      { name: 'Grubość', value: '0.0000' },
    ],
  },
  {
    title: 'Widok',
    dim: true,
    rows: [
      { name: 'Środek X', value: '2815.2875' },
      { name: 'Środek Y', value: '-2258.5768' },
      { name: 'Środek Z', value: '0.0000' },
      { name: 'Wysokość', value: '6217.7368' },
      { name: 'Szerokość', value: '11871.4457' },
    ],
  },
  {
    title: 'Różne',
    rows: [
      { name: 'Symbol LUW włączony', value: 'Tak' },
      { name: 'Symbol LUW w początku', value: 'Tak' },
      { name: 'LUW dla rzutni', value: 'Tak' },
      { name: 'Nazwa UCS', value: '' },
    ],
  },
];

const POINTS = [[202, 373], [334, 393], [195, 438], [102, 466], [360, 477], [273, 503], [405, 528], [172, 542], [120, 590], [348, 615], [483, 609]];

const Drawing = () => (
  <Sketch fill="none" stroke="#fff" shapeRendering="crispEdges">
    <g transform="translate(-88 -156)">
      <g transform="translate(.5 .5)">
        <path d="M463 161H532V203H463ZM483 177H586V220H483ZM463 229H520V260H463ZM500 235H580V271H500Z" />
        <circle cx="549.500" cy="424" r="121" />
        <circle cx="817.500" cy="420" r="102" />
        <path d="M701 158A99 99 0 0 0 622 272L334 393L195 438L102 466" />
        <path d="M842 155A119 119 0 0 0 838 347M972 181A83 83 0 0 0 972 339M549 424L817 420" />
        {POINTS.map(([x, y]) => (
          <path key={`${x}-${y}`} d={`M${x - 18} ${y - 18}L${x + 18} ${y + 18}M${x + 18} ${y - 18}L${x - 18} ${y + 18}`} />
        ))}
        <path d="M641 370H765M703 307V431M698 365H708V375H698Z" />
        <path d="M97 597H109V609H97ZM103 603V534M98 550L103 534L108 550M109 603H172M158 598L172 603L158 608" />
      </g>
      <g transform="translate(320 150) scale(.3333)" strokeWidth="3">
        <path d="M68 25L40 220L133 45L75 165L128 128L265 80M153 25H298L395 118L207 175L165 128L60 100L285 188M153 25L102 76L262 140M42 95L275 55L165 80L105 52L272 97M130 160L180 90M120 197L217 72L175 185L265 80L250 213L365 75L330 155M180 122L360 125L345 147L300 130M110 60L200 165L190 150M60 100L180 122L395 118M250 213L347 130" />
      </g>
      <g fill="#fff" stroke="none" fontFamily="Lato, sans-serif" fontWeight="300" fontSize="19" textAnchor="middle">
        <text x="104" y="523">Y</text>
        <text x="190" y="610">X</text>
      </g>
    </g>
  </Sketch>
);

const Slant = ({ d, fill }: { d: string; fill?: string }) => (
  <svg width="8" height="17" viewBox="0 0 8 17" aria-hidden="true">
    {fill && <path d={fill} fill="#9c9c9c" />}
    <path d={d} fill="none" stroke="#777" />
  </svg>
);

const PropertyValue = ({ row }: { row: Prop }) => {
  if (row.swatch) return <ValueLine><Gap $w={0} /><Icon name="swatch" size={12} />{row.value}</ValueLine>;
  if (row.line) return <ValueLine><Stroke $w={row.line} />{row.value}</ValueLine>;
  return <>{row.value}</>;
};

const ToggleBox = () => (
  <svg width="9" height="9" viewBox="0 0 9 9" aria-hidden="true"><path d="M.5 .5H8.500V8.500H.5ZM1 4.500H8" fill="none" stroke="#000" /></svg>
);

export default function App() {
  return (
    <>
      <Global />
      <Frame>
        <TitleBar>
          <Icon name="app" size={16} />
          <Title>ZWCAD 2017 Wersja profesjonalna - [Rysunek1.dwg]</Title>
          <FrameButtons>
            <FrameButton aria-label="Minimalizuj">
              <svg width="11" height="5"><path d="M.5 .5H10.500V4.500H.5Z" fill="#fff" stroke="#4f5e70" /></svg>
            </FrameButton>
            <FrameButton aria-label="Maksymalizuj">
              <svg width="11" height="9"><path d="M.5 .5H10.500V8.500H.5ZM3.500 3.500H7.500V5.500H3.500Z" fill="#fff" stroke="#4f5e70" /></svg>
            </FrameButton>
            <FrameButton $danger aria-label="Zamknij"><CrossMark size={10} color="#fff" /></FrameButton>
          </FrameButtons>
        </TitleBar>
        <MenuBar>
          <MenuIcon><Icon name="dwg" size={15} /></MenuIcon>
          {MENU.map(([label, w]) => <MenuItem key={label} $w={w}>{label}</MenuItem>)}
          <ChildButtons>
            <ChildButton aria-label="Minimalizuj rysunek"><svg width="8" height="8"><path d="M1 6.500H7" stroke="#76869c" strokeWidth="2" /></svg></ChildButton>
            <ChildButton aria-label="Przywróć rysunek"><svg width="9" height="9"><path d="M3 3V1H8V5.500H6M1 3.500H6V8H1Z" fill="none" stroke="#76869c" strokeWidth="1.500" /></svg></ChildButton>
            <ChildButton aria-label="Zamknij rysunek"><CrossMark size={8} color="#6a7688" /></ChildButton>
          </ChildButtons>
        </MenuBar>
        <Dock>
          <DockRow>
            <Toolbar $first>
              <Grip />
              <Tools names={['newFile', 'open', 'save']} />
              <Gap />
              <Tools names={['print', 'preview', 'publish']} on="publish" />
              <Gap />
              <Tools names={['cut', 'copyClip', 'paste', 'brush']} />
              <Gap $w={6} />
              <Tools names={['undo']} />
              <DropButton aria-label="Lista cofania"><Caret /></DropButton>
              <Tools names={['redo']} />
              <DropButton aria-label="Lista ponawiania"><Caret /></DropButton>
              <Gap $w={12} />
              <Tools names={['hand', 'zoomReal', 'zoomWin', 'zoomPrev']} />
              <Gap />
              <Tools names={['calc']} />
              <Gap />
              <Tools names={['help']} />
            </Toolbar>
            <Toolbar>
              <Grip />
              <Tools names={['textStyle']} />
              <Combo label="Styl tekstu" value="Standard" w={100} />
              <Gap />
              <Tools names={['dimStyle']} />
              <Combo label="Styl wymiarowania" value="ISO-25" w={100} />
              <Gap />
              <Tools names={['tableStyle']} />
              <Combo label="Styl tabeli" value="Standard" w={100} />
              <Gap />
              <Tools names={['leaderStyle']} />
              <Combo label="Styl odnośnika" value="Standard" w={100} />
            </Toolbar>
          </DockRow>
          <DockRow>
            <Toolbar $first>
              <Grip />
              <Tools names={['layers']} />
              <Combo label="Warstwa" value="0" w={200} flat>
                <LayerFlags>
                  {['bulb', 'sun', 'freeze', 'lock', 'swatch'].map((n) => <Icon key={n} name={n} size={16} />)}
                </LayerFlags>
              </Combo>
              <ToolButton aria-label="Poprzednia warstwa"><Icon name="layerPrev" /></ToolButton>
              <ToolButton aria-label="Stany warstw"><Icon name="layers" /></ToolButton>
            </Toolbar>
            <Toolbar>
              <Grip />
              <Combo label="Kolor" value="JakWarstwa" w={198} flat><Icon name="swatch" size={15} /></Combo>
              <Gap $w={11} />
              <Combo label="Rodzaj linii" value="JakWarstwa" w={198} flat><Gap $w={0} /><Stroke $w={86} /></Combo>
              <Gap $w={11} />
              <Combo label="Szerokość linii" value="JakWarstwa" w={198} flat><Gap $w={0} /><Stroke $w={86} /></Combo>
              <Gap $w={11} />
              <Combo label="Styl wydruku" value="JakKolor" w={99} flat off />
            </Toolbar>
          </DockRow>
          <DockRow>
            <Toolbar $first>
              <Grip />
              <Tools names={['dimLinear', 'dimAligned', 'dimArc', 'dimOrdinate']} />
              <Gap />
              <Tools names={['dimRadius', 'dimJogged', 'dimDiameter', 'dimAngular']} on="dimDiameter" />
              <Gap />
              <Tools names={['quickDim', 'dimBase', 'dimCont']} />
              <Gap />
              <Tools names={['quickLeader', 'tolerance', 'centerMark']} />
              <Gap />
              <Tools names={['dimEdit', 'dimOblique', 'dimTextEdit', 'dimUpdate']} />
              <Gap />
              <Combo label="Bieżący styl wymiarowania" value="ISO-25" w={100} />
              <ToolButton aria-label="Edytuj styl"><Icon name="dimStyle" /></ToolButton>
            </Toolbar>
          </DockRow>
        </Dock>
        <Main>
          <SideDock>
            <ToolColumn><ColumnGrip /><Tools names={DRAW} on="line" /></ToolColumn>
            <ToolColumn><ColumnGrip /><Tools names={MODIFY} on="erase" /></ToolColumn>
            <ToolColumn><ColumnGrip /><Tools names={SNAP} on="snapFrom" /></ToolColumn>
          </SideDock>
          <Center>
            <TabStrip>
              <StripCap $w={20} aria-label="Start" />
              <StripCap $w={11} aria-label="Lista rysunków"><Caret /></StripCap>
              <DocTab>
                <Icon name="dwg" size={15} />
                <DocName>Rysunek1.dwg</DocName>
                <TabClose aria-label="Zamknij kartę"><CrossMark size={10} color="#000" /></TabClose>
              </DocTab>
              <NewTab aria-label="Nowa karta"><Icon name="page" /></NewTab>
              <Arrow aria-label="W lewo"><svg width="8" height="14"><path d="M7 1V13L1 7Z" fill="none" stroke="#222" /></svg></Arrow>
              <Arrow aria-label="W prawo"><svg width="8" height="14"><path d="M1 1V13L7 7Z" fill="none" stroke="#222" /></svg></Arrow>
            </TabStrip>
            <Canvas>
              <Drawing />
              <ViewButtons>
                <ViewButton aria-label="Minimalizuj widok"><svg width="11" height="11"><path d="M1 9H10" stroke="#fff" strokeWidth="2" /></svg></ViewButton>
                <ViewButton aria-label="Przywróć widok"><svg width="11" height="11"><path d="M4 4V1.500H9.500V7H7.500M1.500 4.500H7V9.500H1.500Z" fill="none" stroke="#fff" strokeWidth="2" /></svg></ViewButton>
                <ViewButton aria-label="Zamknij widok"><CrossMark size={10} color="#fff" /></ViewButton>
              </ViewButtons>
            </Canvas>
            <SheetBar>
              <SheetNav aria-label="Pierwszy"><svg width="8" height="9"><path d="M1 0V9" stroke="#666" /><path d="M8 0V9L3 4.500Z" fill="#666" /></svg></SheetNav>
              <SheetNav aria-label="Poprzedni"><svg width="5" height="9"><path d="M5 0V9L0 4.500Z" fill="#666" /></svg></SheetNav>
              <SheetNav aria-label="Następny"><svg width="5" height="9"><path d="M0 0V9L5 4.500Z" fill="#666" /></svg></SheetNav>
              <SheetNav aria-label="Ostatni"><svg width="8" height="9"><path d="M7 0V9" stroke="#666" /><path d="M0 0V9L5 4.500Z" fill="#666" /></svg></SheetNav>
              <Slant d="M0 1L7 17" fill="M0 1H8V17H7Z" />
              <SheetTab $active>Model</SheetTab>
              <Slant d="M8 1L1 17" fill="M0 1H8L1 17H0Z" />
              <SheetTab>Arkusz1</SheetTab>
              <Slant d="M0 16.500H1L4 9M1 1L8 16.500" />
              <SheetTab>Arkusz2</SheetTab>
              <Slant d="M8 1L1 16.500H0" />
            </SheetBar>
          </Center>
          <Panel>
            <PanelHead>
              <PanelGrip />
              <PanelClose aria-label="Zamknij panel"><CrossMark size={10} /></PanelClose>
            </PanelHead>
            <PickRow>
              <Combo label="Wybór" value="Brak wyboru" />
              {['pickAdd', 'selectObj', 'quickSel'].map((n) => (
                <PickButton key={n} aria-label={n}><Icon name={n} size={17} /></PickButton>
              ))}
            </PickRow>
            <Sheet>
              <Grid>
                <colgroup><col className="gutter" /><col className="name" /><col /></colgroup>
                {GROUPS.map((g, gi) => (
                  <tbody key={g.title}>
                    <tr><th colSpan={3} scope="rowgroup"><GroupHead><ToggleBox />{g.title}</GroupHead></th></tr>
                    {g.rows.map((r, ri) => (
                      <tr key={r.name}>
                        <Gutter $last={ri === g.rows.length - 1 && gi < GROUPS.length - 1} />
                        <NameCell>{r.name}</NameCell>
                        <ValueCell $dim={g.dim}><PropertyValue row={r} /></ValueCell>
                      </tr>
                    ))}
                  </tbody>
                ))}
              </Grid>
            </Sheet>
            <Note />
          </Panel>
        </Main>
        <Command>
          <CommandSide>
            <PanelClose aria-label="Zamknij wiersz poleceń"><CrossMark size={10} /></PanelClose>
            <CommandGrip />
          </CommandSide>
          <CommandBoxes>
            <History>
              <Spinner aria-label="Przewiń"><svg width="7" height="8"><path d="M3 0H4V1H3ZM0 7H7V8H0Z" fill="#222" /></svg></Spinner>
            </History>
            <Prompt>Polecenie:<PromptInput /></Prompt>
          </CommandBoxes>
        </Command>
        <Status>
          <Coords>5138.5456, -2023.5652, 0.0000</Coords>
          {MODES.map((n) => (
            <StatusButton key={n} $on={!MODES_OFF.includes(n)} aria-label={n}><Icon name={n} /></StatusButton>
          ))}
          <StatusEnd>
            <StatusButton aria-label="Ustawienia"><Icon name="gear" size={16} /></StatusButton>
            <StatusButton aria-label="Pełny ekran"><Icon name="expand" /></StatusButton>
            <SizeGrip width="14" height="9" aria-hidden="true">
              <path d="M4 7H6V9H4ZM7 7H9V9H7ZM10 7H12V9H10ZM7 4H9V6H7ZM10 4H12V6H10ZM10 1H12V3H10Z" fill="#c9b9bb" />
            </SizeGrip>
          </StatusEnd>
        </Status>
      </Frame>
    </>
  );
}
